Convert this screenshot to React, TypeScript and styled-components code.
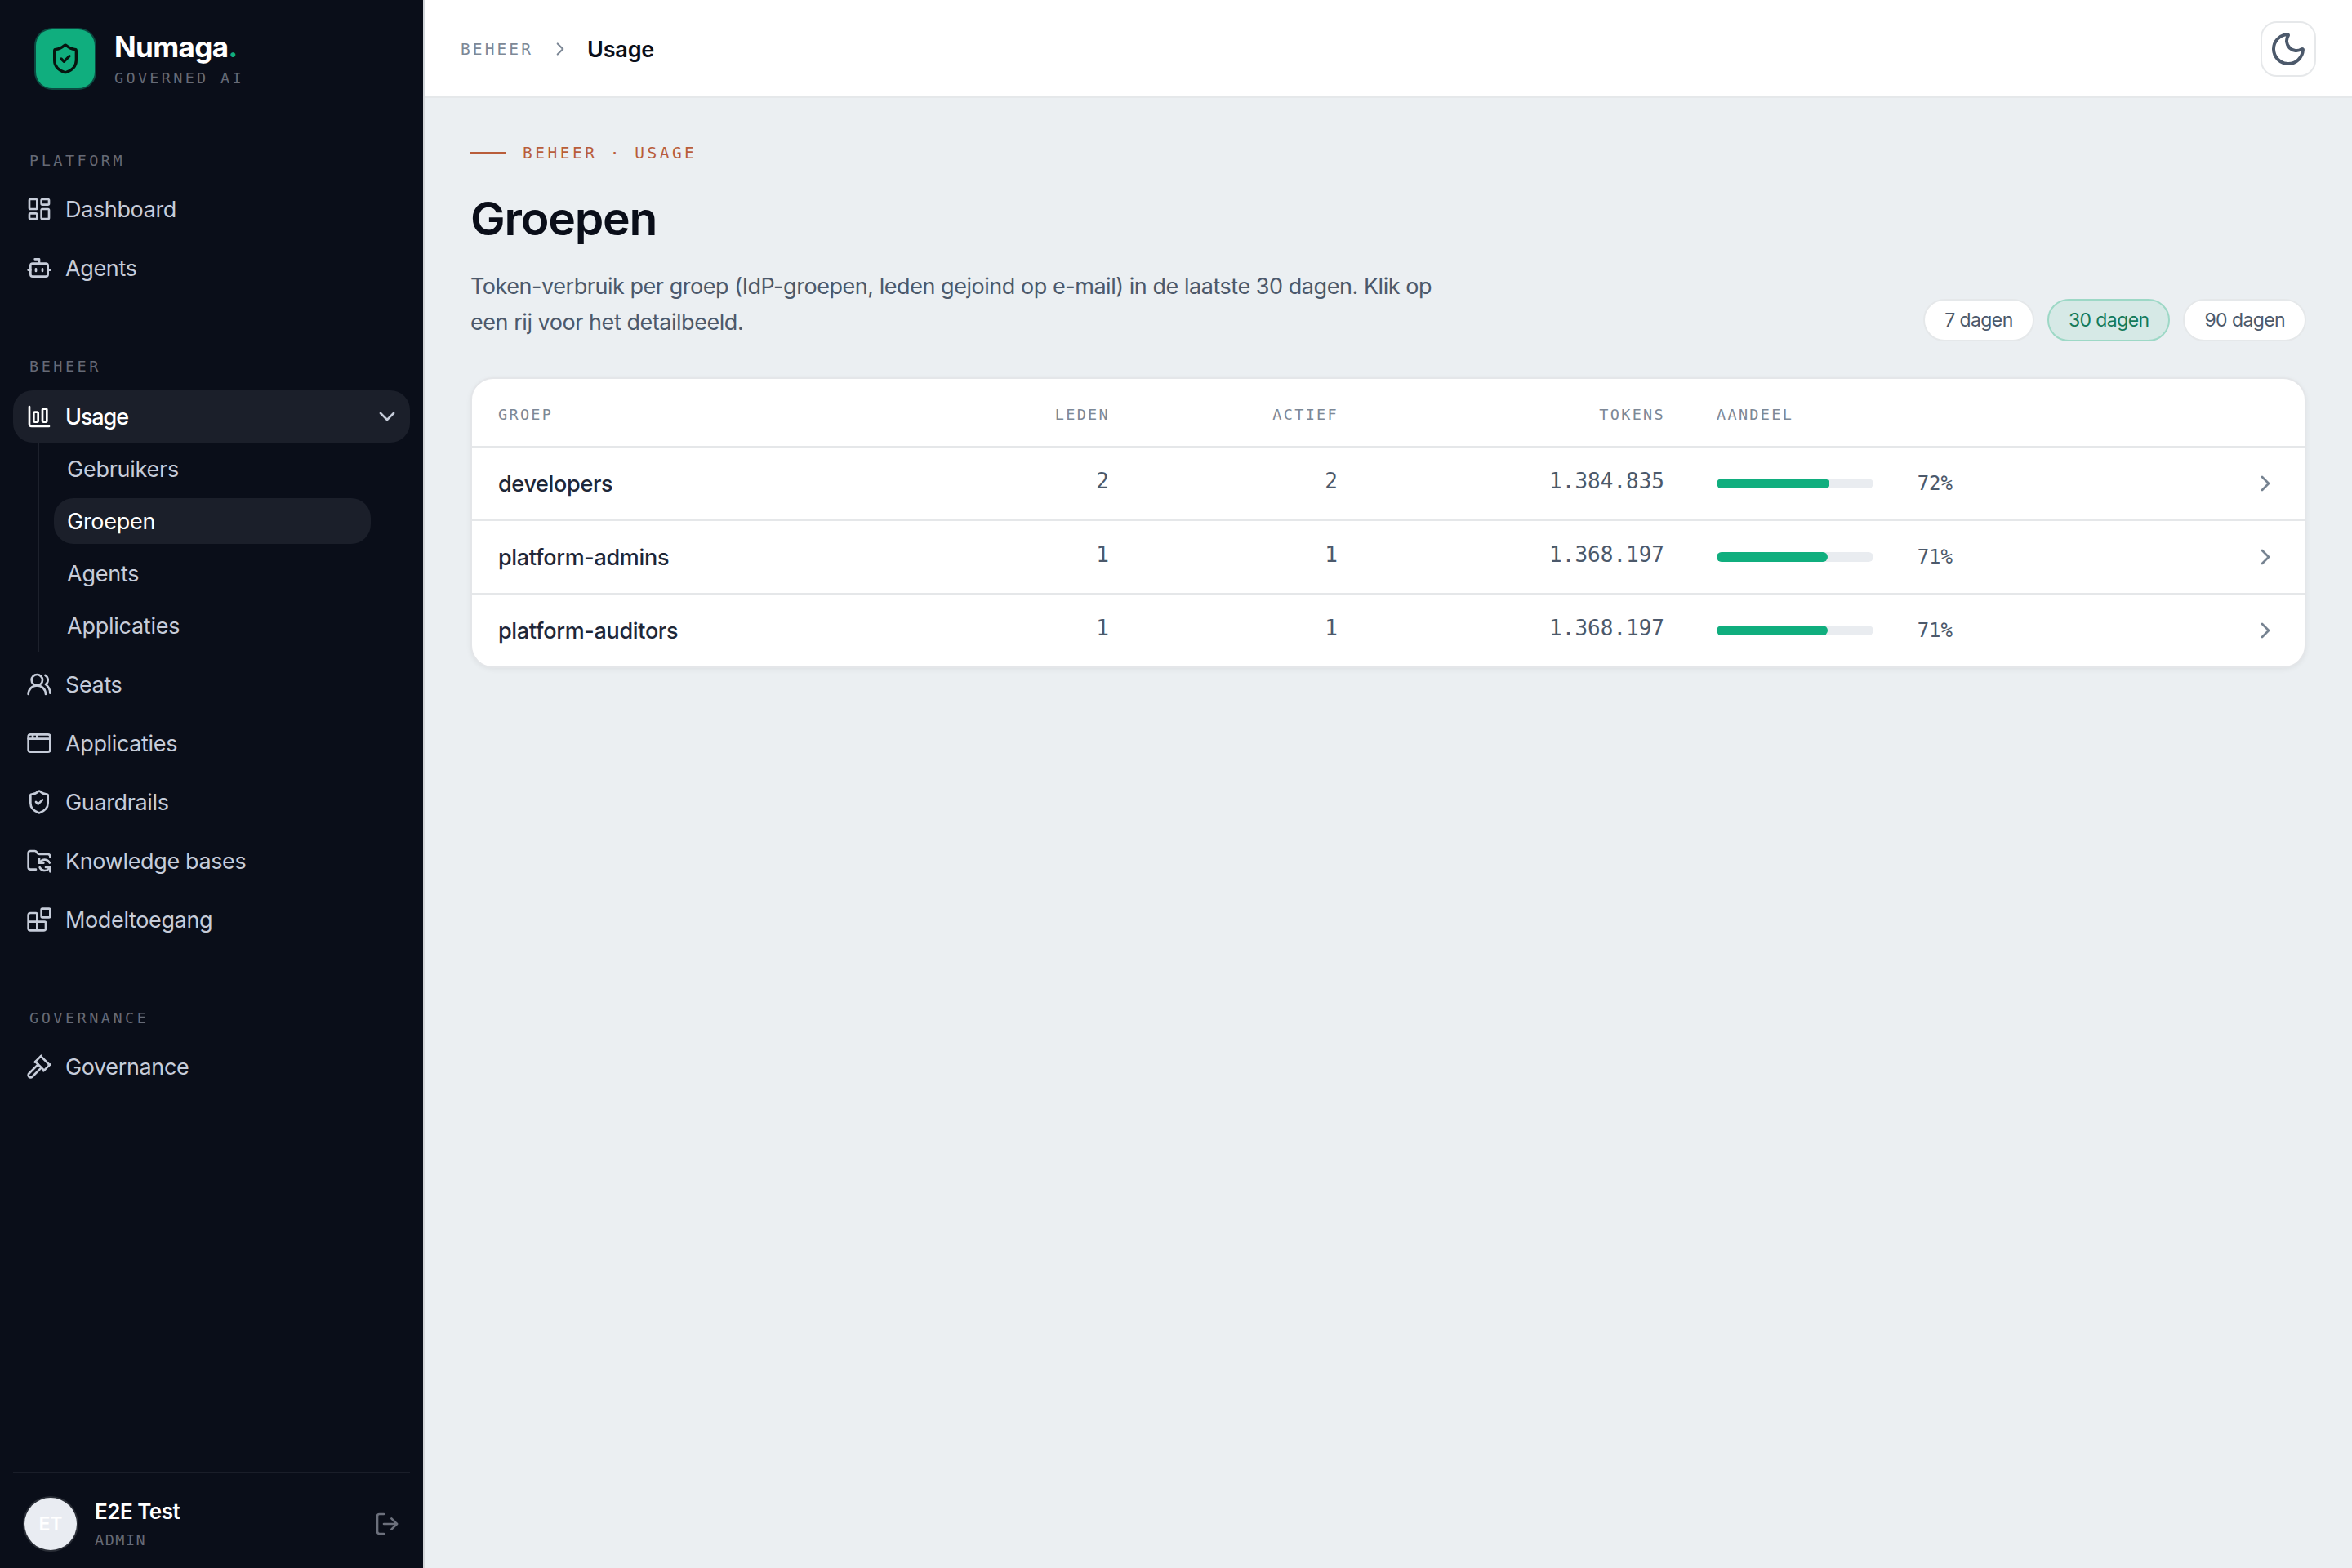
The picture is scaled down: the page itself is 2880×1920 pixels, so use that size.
import React from 'react'
import styled, { createGlobalStyle } from 'styled-components'
import {
  AppWindow,
  Blocks,
  Bot,
  ChartColumnBig,
  ChevronDown,
  ChevronRight,
  FolderSync,
  Gavel,
  LayoutDashboard,
  LogOut,
  Moon,
  ShieldCheck,
  UsersRound,
  type LucideIcon,
} from 'lucide-react'

const sans = `Inter, 'Liberation Sans', sans-serif`
const mono = `'DejaVu Sans Mono', monospace`

const GlobalStyle = createGlobalStyle`
  * {
    box-sizing: border-box;
  }

  body {
    margin: 0;
    font-family: ${sans};
    background: #ebeff2;
  }

  h1, p {
    margin: 0;
  }

  button {
    font-family: inherit;
    cursor: pointer;
  }
`

const Layout = styled.div`
  display: flex;
  height: 1920px;
`

// sidebar

const Sidebar = styled.aside`
  display: flex;
  flex-direction: column;
  width: 520px;
  padding: 36px 16px 20px;
  background: #0a0e19;
  border-right: 2px solid #d3d6da;
`

const Brand = styled.div`
  display: flex;
  align-items: center;
  gap: 24px;
  height: 72px;
  padding-left: 28px;
`

const BrandMark = styled.div`
  display: flex;
  align-items: center;
  justify-content: center;
  width: 72px;
  height: 72px;
  border-radius: 20px;
  background: #10ae7e;
  box-shadow: 0 0 0 2px #0b4a41;
  color: #07150f;
`

const BrandText = styled.div`
  display: flex;
  flex-direction: column;
  gap: 8px;
  padding-top: 2px;
`

const BrandName = styled.div`
  color: #fff;
  font-size: 35px;
  font-weight: 700;
  line-height: 38px;
  letter-spacing: -0.6px;
`

const BrandDot = styled.span`
  color: #10ae7e;
`

const BrandTag = styled.div`
  color: #666a76;
  font-family: ${mono};
  font-size: 18.5px;
  line-height: 24px;
  letter-spacing: 3.3px;
`

const Nav = styled.nav`
  flex: 1;
  padding-top: 79px;
`

const Section = styled.section`
  & + & {
    margin-top: 79px;
  }
`

const SectionLabel = styled.div<{ $gap?: number }>`
  margin-bottom: ${props => props.$gap ?? 17}px;
  padding-left: 20px;
  color: #666a76;
  font-family: ${mono};
  font-size: 18.5px;
  line-height: 20px;
  letter-spacing: 3.5px;
`

const NavList = styled.div`
  display: flex;
  flex-direction: column;
  gap: 8px;
`

const NavItem = styled.a<{ $active?: boolean }>`
  display: flex;
  align-items: center;
  gap: 16px;
  height: 64px;
  padding: 0 12px 0 16px;
  border-radius: 24px;
  background: ${props => (props.$active ? '#1b1f2a' : 'transparent')};
  color: ${props => (props.$active ? '#fff' : '#c6ccd9')};
  font-size: 27px;
  font-weight: ${props => (props.$active ? 500 : 400)};
  letter-spacing: ${props => (props.$active ? '-1.1px' : '-0.36px')};
`

const NavText = styled.span`
  flex: 1;
`

const ToggleIcon = styled(ChevronDown)`
  color: #c6ccd9;
`

const SubNav = styled.div`
  display: flex;
  flex-direction: column;
  gap: 8px;
  margin: -8px 48px 0 30px;
  padding: 4px 0 4px 18px;
  border-left: 2px solid #1d212c;
`

const SubNavItem = styled.a<{ $active?: boolean }>`
  display: flex;
  align-items: center;
  height: 56px;
  padding-left: 16px;
  border-radius: 24px;
  background: ${props => (props.$active ? '#1b1f2a' : 'transparent')};
  color: ${props => (props.$active ? '#fff' : '#c6ccd9')};
  font-size: 27px;
  letter-spacing: -0.25px;
`

const UserBar = styled.div`
  display: flex;
  align-items: center;
  gap: 22px;
  height: 98px;
  padding: 28px 12px 0 14px;
  border-top: 2px solid #1a1e29;
`

const Avatar = styled.div`
  display: flex;
  align-items: center;
  justify-content: center;
  width: 64px;
  height: 64px;
  border-radius: 50%;
  background: #e9ecf2;
  box-shadow: 0 0 0 2px #2a2e37;
  color: #fff;
  font-size: 23px;
  font-weight: 600;
`

const UserInfo = styled.div`
  display: flex;
  flex: 1;
  flex-direction: column;
  gap: 6px;
`

const UserName = styled.div`
  color: #fff;
  font-size: 26px;
  font-weight: 600;
  line-height: 34px;
  letter-spacing: -0.5px;
`

const UserRole = styled.div`
  color: #666a76;
  font-family: ${mono};
  font-size: 18.5px;
  line-height: 24px;
  letter-spacing: 1.5px;
`

const LogOutIcon = styled(LogOut)`
  color: #6c707c;
`

// main column

const Main = styled.main`
  flex: 1;
`

const Topbar = styled.header`
  display: flex;
  align-items: center;
  height: 120px;
  padding: 2px 44px 0;
  background: #fff;
  border-bottom: 2px solid #e5e8ea;
`

const Crumb = styled.span`
  color: #7d8896;
  font-family: ${mono};
  font-size: 19.5px;
  letter-spacing: 3.1px;
`

const CrumbIcon = styled(ChevronRight)`
  margin: 0 20px;
  color: #7d8896;
`

const CrumbCurrent = styled.span`
  flex: 1;
  color: #0a0e19;
  font-size: 27px;
  font-weight: 600;
  letter-spacing: -0.2px;
`

const ThemeButton = styled.button`
  display: flex;
  align-items: center;
  justify-content: center;
  width: 68px;
  height: 68px;
  padding: 0;
  border: 2px solid #e6e8ea;
  border-radius: 20px;
  background: #fff;
  color: #4c596b;
`

const Content = styled.div`
  padding: 54px 56px;
`

const PageHead = styled.div`
  display: flex;
  align-items: flex-end;
  justify-content: space-between;
  margin-bottom: 44px;
`

const Eyebrow = styled.div`
  display: flex;
  align-items: center;
  gap: 20px;
  height: 26px;
  color: #b95d3a;
  font-family: ${mono};
  font-size: 19.5px;
  letter-spacing: 3.5px;

  &::before {
    content: '';
    width: 44px;
    height: 2px;
    background: currentColor;
  }
`

const Title = styled.h1`
  margin-top: 34px;
  color: #0a0e19;
  font-size: 57px;
  font-weight: 600;
  line-height: 68px;
  letter-spacing: -1.2px;
`

const Lead = styled.p`
  width: 1200px;
  margin-top: 27px;
  padding-bottom: 1px;
  color: #4c596b;
  font-size: 27px;
  line-height: 44px;
  letter-spacing: -0.46px;
`

const Periods = styled.div`
  display: flex;
  gap: 16px;
`

const Period = styled.button<{ $active?: boolean }>`
  min-width: 136px;
  height: 52px;
  padding: 0 24px;
  border: 2px solid ${props => (props.$active ? '#9dd8c6' : '#e5e8ea')};
  border-radius: 26px;
  background: ${props => (props.$active ? '#d6e9e6' : '#fff')};
  color: ${props => (props.$active ? '#147a5a' : '#4c596b')};
  font-size: 23px;
  letter-spacing: -0.6px;
`

const Table = styled.div`
  border: 2px solid #e4e6e9;
  border-radius: 28px;
  background: #fff;
  box-shadow: 0 2px 6px rgba(10, 14, 25, 0.06);
`

const Row = styled.div`
  display: grid;
  grid-template-columns: 1fr 280px 280px 400px 720px 32px;
  align-items: center;
  height: 90px;
  padding: 0 32px;
  border-bottom: 2px solid #e5e7e9;

  &:last-child {
    height: 88px;
    border-bottom: 0;
  }
`

const HeadRow = styled(Row)`
  height: 84px;
  color: #7d8896;
  font-family: ${mono};
  font-size: 18.5px;
  letter-spacing: 2.3px;
`

const HeadCell = styled.span<{ $align?: 'right'; $inset?: boolean }>`
  margin-right: -1px;
  padding-top: 4px;
  padding-left: ${props => (props.$inset ? 64 : 0)}px;
  text-align: ${props => props.$align ?? 'left'};
`

const NameCell = styled.span`
  color: #1e2738;
  font-size: 27px;
  font-weight: 500;
  letter-spacing: -0.32px;
`

const NumberCell = styled.span`
  padding-bottom: 6px;
  color: #4c596b;
  font-family: ${mono};
  font-size: 26px;
  text-align: right;
`

const ShareCell = styled.span`
  display: flex;
  align-items: center;
  padding-left: 64px;
`

const Track = styled.span`
  display: block;
  width: 192px;
  height: 12px;
  border-radius: 6px;
  background: #e9ecf0;
`

const Fill = styled.span`
  display: block;
  height: 12px;
  border-radius: 6px;
  background: #10ae7e;
`

const Percent = styled.span`
  width: 97px;
  color: #4c596b;
  font-family: ${mono};
  font-size: 24px;
  text-align: right;
`

const RowIcon = styled(ChevronRight)`
  color: #768391;
`

type Item = { label: string; icon: LucideIcon }

const platform: Item[] = [
  { label: 'Dashboard', icon: LayoutDashboard },
  { label: 'Agents', icon: Bot },
]

const usagePages = ['Gebruikers', 'Groepen', 'Agents', 'Applicaties']

const beheer: Item[] = [
  { label: 'Seats', icon: UsersRound },
  { label: 'Applicaties', icon: AppWindow },
  { label: 'Guardrails', icon: ShieldCheck },
  { label: 'Knowledge bases', icon: FolderSync },
  { label: 'Modeltoegang', icon: Blocks },
]

const governance: Item[] = [{ label: 'Governance', icon: Gavel }]

const groups = [
  { name: 'developers', members: 2, active: 2, tokens: '1.384.835', share: 72 },
  { name: 'platform-admins', members: 1, active: 1, tokens: '1.368.197', share: 71 },
  { name: 'platform-auditors', members: 1, active: 1, tokens: '1.368.197', share: 71 },
]

const NavItems = ({ items }: { items: Item[] }) => (
  <>
    {items.map(({ label, icon: Icon }) => (
      <NavItem key={label}>
        <Icon size={32} strokeWidth={2} />
        <NavText>{label}</NavText>
      </NavItem>
    ))}
  </>
)

const AppSidebar = () => (
  <Sidebar>
    <Brand>
      <BrandMark>
        <ShieldCheck size={40} strokeWidth={2} />
      </BrandMark>
      <BrandText>
        <BrandName>
          Numaga<BrandDot>.</BrandDot>
        </BrandName>
        <BrandTag>GOVERNED AI</BrandTag>
      </BrandText>
    </Brand>
    <Nav>
      <Section>
        <SectionLabel>PLATFORM</SectionLabel>
        <NavList>
          <NavItems items={platform} />
        </NavList>
      </Section>
      <Section>
        <SectionLabel $gap={19}>BEHEER</SectionLabel>
        <NavList>
          <NavItem $active>
            <ChartColumnBig size={32} strokeWidth={2} />
            <NavText>Usage</NavText>
            <ToggleIcon size={32} strokeWidth={2} />
          </NavItem>
          <SubNav>
            {usagePages.map(page => (
              <SubNavItem key={page} $active={page === 'Groepen'}>
                {page}
              </SubNavItem>
            ))}
          </SubNav>
          <NavItems items={beheer} />
        </NavList>
      </Section>
      <Section>
        <SectionLabel>GOVERNANCE</SectionLabel>
        <NavList>
          <NavItems items={governance} />
        </NavList>
      </Section>
    </Nav>
    <UserBar>
      <Avatar>ET</Avatar>
      <UserInfo>
        <UserName>E2E Test</UserName>
        <UserRole>ADMIN</UserRole>
      </UserInfo>
      <LogOutIcon size={32} strokeWidth={2} />
    </UserBar>
  </Sidebar>
)

const GroupsTable = () => (
  <Table>
    <HeadRow>
      <HeadCell>GROEP</HeadCell>
      <HeadCell $align='right'>LEDEN</HeadCell>
      <HeadCell $align='right'>ACTIEF</HeadCell>
      <HeadCell $align='right'>TOKENS</HeadCell>
      <HeadCell $inset>AANDEEL</HeadCell>
    </HeadRow>
    {groups.map(group => (
      <Row key={group.name}>
        <NameCell>{group.name}</NameCell>
        <NumberCell>{group.members}</NumberCell>
        <NumberCell>{group.active}</NumberCell>
        <NumberCell>{group.tokens}</NumberCell>
        <ShareCell>
          <Track>
            <Fill style={{ width: `${group.share}%` }} />
          </Track>
          <Percent>{group.share}%</Percent>
        </ShareCell>
        <RowIcon size={32} strokeWidth={2} />
      </Row>
    ))}
  </Table>
)

const App = () => {
  return (
    <>
      <GlobalStyle />
      <Layout>
        <AppSidebar />
        <Main>
          <Topbar>
            <Crumb>BEHEER</Crumb>
            <CrumbIcon size={26} strokeWidth={2} />
            <CrumbCurrent>Usage</CrumbCurrent>
            <ThemeButton aria-label='Thema'>
              <Moon size={48} strokeWidth={2} />
            </ThemeButton>
          </Topbar>
          <Content>
            <PageHead>
              <div>
                <Eyebrow>BEHEER · USAGE</Eyebrow>
                <Title>Groepen</Title>
                <Lead>
                  Token-verbruik per groep (IdP-groepen, leden gejoind op e-mail) in de laatste 30
                  dagen. Klik op een rij voor het detailbeeld.
                </Lead>
              </div>
              <Periods>
                <Period>7 dagen</Period>
                <Period $active>30 dagen</Period>
                <Period>90 dagen</Period>
              </Periods>
            </PageHead>
            <GroupsTable />
          </Content>
        </Main>
      </Layout>
    </>
  )
}

export default App
